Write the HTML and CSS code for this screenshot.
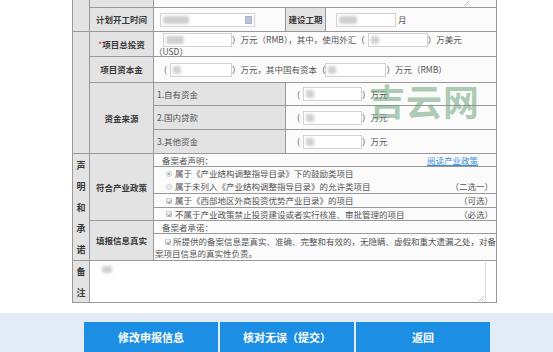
FILE: index.html
```html
<!DOCTYPE html>
<html lang="zh-CN">
<head>
<meta charset="utf-8">
<title>备案信息确认</title>
<link rel="stylesheet" href="styles.css">
</head>
<body>
<div class="page">
  <div class="form">
    <div class="cell side side-a"></div>
    <div class="cell lbl lbl-top"></div>
    <div class="cell val val-top">
      <svg class="grip grip-top" width="6" height="6" viewBox="0 0 6 6"><path d="M1 6 L6 1 M3.5 6 L6 3.5" stroke="#b5b5b5" stroke-width="0.8" fill="none"/></svg>
    </div>

    <div class="cell lbl lbl-start">计划开工时间</div>
    <div class="cell val val-start"><span class="field field-date"><span class="blur blur-date"></span><span class="cal"></span></span></div>
    <div class="cell lbl lbl-period">建设工期</div>
    <div class="cell val val-period"><span class="field field-period"><span class="blur blur-sm"></span></span><span class="unit">月</span></div>

    <div class="cell side side-b"></div>
    <div class="cell lbl lbl-total"><span class="req">*</span>项目总投资</div>
    <div class="cell val val-total">
      <div class="line line-total">
        <span class="field field-total"><span class="blur blur-sm"></span></span>
        <span class="txt">）万元（RMB），其中，使用外汇（</span>
        <span class="field field-fx"><span class="blur blur-xs"></span></span>
        <span class="txt">）万美元</span>
      </div>
      <div class="line-usd">（USD）</div>
    </div>

    <div class="cell lbl lbl-capital">项目资本金</div>
    <div class="cell val val-capital">
      <span class="paren">(</span>
      <span class="field field-cap"><span class="blur blur-xs"></span></span>
      <span class="txt">）万元，其中国有资本（</span>
      <span class="field field-state"><span class="blur blur-xs"></span></span>
      <span class="txt">）万元（RMB）</span>
    </div>

    <div class="cell lbl lbl-fund">资金来源</div>
    <div class="cell sub sub-1">1.自有资金</div>
    <div class="cell val amt amt-1"><span class="paren">(</span><span class="field field-amt"><span class="blur blur-xs"></span></span><span class="txt">）万元</span></div>
    <div class="cell sub sub-2">2.国内贷款</div>
    <div class="cell val amt amt-2"><span class="paren">(</span><span class="field field-amt"><span class="blur blur-xs"></span></span><span class="txt">）万元</span></div>
    <div class="cell sub sub-3">3.其他资金</div>
    <div class="cell val amt amt-3"><span class="paren">(</span><span class="field field-amt"><span class="blur blur-xs"></span></span><span class="txt">）万元</span></div>

    <div class="cell side side-c vert">
      <span>声</span><span>明</span><span>和</span><span>承</span><span>诺</span>
    </div>
    <div class="cell lbl lbl-policy">符合产业政策</div>
    <div class="cell val pol pol-head"><span>备案者声明：</span><span class="link">阅读产业政策</span></div>
    <div class="cell val pol pol-radio">
      <div class="opt"><span class="radio on"></span><span>属于《产业结构调整指导目录》下的鼓励类项目</span></div>
      <div class="opt"><span class="radio"></span><span class="grow">属于未列入《产业结构调整指导目录》的允许类项目</span><span class="note">（二选一）</span></div>
    </div>
    <div class="cell val pol pol-west"><div class="opt"><span class="check"></span><span class="grow">属于《西部地区外商投资优势产业目录》的项目</span><span class="note">（可选）</span></div></div>
    <div class="cell val pol pol-ban"><div class="opt"><span class="check"></span><span class="grow">不属于产业政策禁止投资建设或者实行核准、审批管理的项目</span><span class="note">（必选）</span></div></div>

    <div class="cell lbl lbl-true">填报信息真实</div>
    <div class="cell val pol tr-head"><span>备案者承诺：</span></div>
    <div class="cell val tr-body"><p class="pledge"><span class="check check-inline"></span>所提供的备案信息是真实、准确、完整和有效的，无隐瞒、虚假和重大遗漏之处，对备案项目信息的真实性负责。</p></div>

    <div class="cell side side-d vert"><span>备</span><span>注</span></div>
    <div class="cell val val-note">
      <div class="memo">
        <span class="blur blur-memo"></span>
        <svg class="grip grip-memo" width="6" height="6" viewBox="0 0 6 6"><path d="M1 6 L6 1 M3.5 6 L6 3.5" stroke="#b5b5b5" stroke-width="0.8" fill="none"/></svg>
      </div>
    </div>
  </div>
</div>

<div class="footer">
  <div class="actions">
    <button class="btn">修改申报信息</button>
    <button class="btn">核对无误（提交）</button>
    <button class="btn">返回</button>
  </div>
</div>

<div class="watermark">吉云网</div>
</body>
</html>
```

FILE: styles.css
```css
html, body {
  margin: 0;
  padding: 0;
  background: #ffffff;
  overflow: hidden;
}

body {
  width: 553px;
  height: 352px;
  position: relative;
  font-family: "Noto Sans CJK SC", "Noto Sans", sans-serif;
  font-size: 8.5px;
  color: #555;
}

.page {
  padding-left: 72px;
}

.form {
  display: grid;
  grid-template-columns: 16px 63px 131px 39px 170px;
  grid-template-rows: 26px 23px 24px 25px 22px 23px 23px 12px 26px 13px 12px 12px 26px 41px;
  gap: 1px;
  padding: 1px;
  width: max-content;
  background: #999;
  margin-top: -20px;
}

.cell {
  min-width: 0;
  overflow: hidden;
  display: flex;
  align-items: center;
  line-height: 11px;
  white-space: nowrap;
}

.side, .lbl, .sub {
  background: #e3e3e3;
}

.lbl {
  justify-content: center;
  font-weight: bold;
  color: #3a3a3a;
}

.val {
  background: #fbfbfb;
}

.sub {
  padding-left: 3px;
  color: #555;
}

.req {
  color: #e03030;
  font-weight: normal;
}

/* placement */
.side-a { grid-column: 1; grid-row: 1 / 3; }
.lbl-top { grid-column: 2; grid-row: 1; }
.val-top { grid-column: 3 / 6; grid-row: 1; position: relative; }
.lbl-start { grid-column: 2; grid-row: 2; }
.val-start { grid-column: 3; grid-row: 2; }
.lbl-period { grid-column: 4; grid-row: 2; }
.val-period { grid-column: 5; grid-row: 2; }
.side-b { grid-column: 1; grid-row: 3 / 8; }
.lbl-total { grid-column: 2; grid-row: 3; }
.val-total { grid-column: 3 / 6; grid-row: 3; }
.lbl-capital { grid-column: 2; grid-row: 4; }
.val-capital { grid-column: 3 / 6; grid-row: 4; }
.lbl-fund { grid-column: 2; grid-row: 5 / 8; }
.sub-1 { grid-column: 3; grid-row: 5; }
.amt-1 { grid-column: 4 / 6; grid-row: 5; }
.sub-2 { grid-column: 3; grid-row: 6; }
.amt-2 { grid-column: 4 / 6; grid-row: 6; }
.sub-3 { grid-column: 3; grid-row: 7; }
.amt-3 { grid-column: 4 / 6; grid-row: 7; }
.side-c { grid-column: 1; grid-row: 8 / 14; }
.lbl-policy { grid-column: 2; grid-row: 8 / 12; }
.pol-head { grid-column: 3 / 6; grid-row: 8; }
.pol-radio { grid-column: 3 / 6; grid-row: 9; }
.pol-west { grid-column: 3 / 6; grid-row: 10; }
.pol-ban { grid-column: 3 / 6; grid-row: 11; }
.lbl-true { grid-column: 2; grid-row: 12 / 14; }
.tr-head { grid-column: 3 / 6; grid-row: 12; }
.tr-body { grid-column: 3 / 6; grid-row: 13; }
.side-d { grid-column: 1; grid-row: 14; }
.val-note { grid-column: 2 / 6; grid-row: 14; }

/* top textarea stub */
.grip {
  position: absolute;
}
.grip-top {
  right: 27px;
  bottom: 1px;
}

/* inputs */
.field {
  display: inline-flex;
  align-items: center;
  box-sizing: border-box;
  height: 14px;
  background: #fff;
  border: 1px solid #d2d2d2;
  padding-left: 2px;
  flex: none;
}

.blur {
  display: inline-block;
  height: 8px;
  background: #cfcfcf;
  filter: blur(1.6px);
  border-radius: 2px;
}
.blur-date { width: 26px; }
.blur-sm { width: 18px; }
.blur-xs { width: 8px; }
.blur-memo { width: 10px; height: 7px; margin: 4px 0 0 10px; }

.field-date {
  width: 95px;
  margin-left: 6px;
  justify-content: space-between;
  padding-right: 2px;
}
.cal {
  width: 7px;
  height: 8px;
  background: #b9c3d9;
  border: 1px solid #a8b3cc;
  box-sizing: border-box;
}

.field-period {
  width: 60px;
  margin-left: 10px;
}
.unit {
  margin-left: 2px;
}

.val-total {
  flex-direction: column;
  align-items: flex-start;
  justify-content: flex-start;
  padding-left: 3px;
}
.line-total {
  display: flex;
  align-items: center;
  height: 15px;
}
.line-usd {
  line-height: 9px;
  margin-left: -3px;
}
.field-total {
  width: 69px;
  margin-left: 6px;
}
.field-fx {
  width: 60px;
  margin-left: 3px;
}

.val-capital {
  padding-left: 10px;
}
.paren {
  margin-right: 3px;
}
.field-cap {
  width: 62px;
}
.field-state {
  width: 61px;
}

.amt {
  padding-left: 11px;
}
.field-amt {
  width: 59px;
}

/* policy section */
.pol {
  padding: 0 3px 0 8px;
}
.pol-head {
  justify-content: space-between;
  padding-right: 18px;
}
.link {
  color: #3d8fd6;
  text-decoration: underline;
}
.pol-radio {
  flex-direction: column;
  align-items: stretch;
  justify-content: center;
}
.opt {
  display: flex;
  align-items: center;
  height: 13px;
  width: 100%;
}
.pol-west .opt, .pol-ban .opt {
  height: 12px;
}
.grow {
  flex: 1;
}
.note {
  color: #555;
}

.radio {
  width: 6px;
  height: 6px;
  border-radius: 50%;
  border: 1px solid #cfcfcf;
  background: #f0f0f0;
  box-sizing: border-box;
  margin: 0 3px 0 4px;
  flex: none;
  position: relative;
}
.radio.on::after {
  content: "";
  position: absolute;
  left: 1px;
  top: 1px;
  width: 2px;
  height: 2px;
  border-radius: 50%;
  background: #9a9a9a;
}

.check {
  width: 6px;
  height: 6px;
  border: 1px solid #cfcfcf;
  background: #efefef;
  box-sizing: border-box;
  margin: 0 3px 0 4px;
  flex: none;
  position: relative;
  display: inline-block;
}
.check::after {
  content: "";
  position: absolute;
  left: 1px;
  top: 0;
  width: 1.5px;
  height: 3px;
  border: solid #9a9a9a;
  border-width: 0 1px 1px 0;
  transform: rotate(40deg);
}

.tr-body {
  align-items: center;
  padding: 0 0 0 1px;
}
.pledge {
  margin: 0;
  white-space: normal;
  line-height: 12px;
  word-break: break-all;
}
.check-inline {
  margin: 0 2px 0 10px;
  vertical-align: 0;
}

/* vertical labels */
.vert {
  flex-direction: column;
  justify-content: center;
  font-weight: bold;
  color: #3a3a3a;
  font-size: 9px;
}
.vert span {
  line-height: 21px;
}

/* memo */
.val-note {
  background: #fff;
  align-items: stretch;
}
.memo {
  position: relative;
  flex: 1;
  margin: 1px 10px 0 2px;
  border-right: 1px solid #d8d8d8;
  background: #fff;
  display: flex;
  align-items: flex-start;
}
.grip-memo {
  right: 1px;
  bottom: 1px;
}

/* footer */
.footer {
  margin-top: 10px;
  background: #e2ecf8;
  padding-top: 9px;
  height: 60px;
}
.actions {
  display: flex;
  gap: 2px;
  padding-left: 84px;
}
.btn {
  width: 134px;
  height: 30px;
  border: none;
  background: #1c8fe4;
  color: #fff;
  font-family: "Noto Sans CJK SC", "Noto Sans", sans-serif;
  font-weight: bold;
  font-size: 11px;
  padding: 0;
  margin: 0;
}

.watermark {
  position: absolute;
  left: 369px;
  top: 78px;
  font-family: "Noto Sans CJK SC", sans-serif;
  font-weight: bold;
  font-size: 36px;
  line-height: 44px;
  letter-spacing: 1px;
  color: rgba(96, 156, 110, 0.5);
  pointer-events: none;
}
```
